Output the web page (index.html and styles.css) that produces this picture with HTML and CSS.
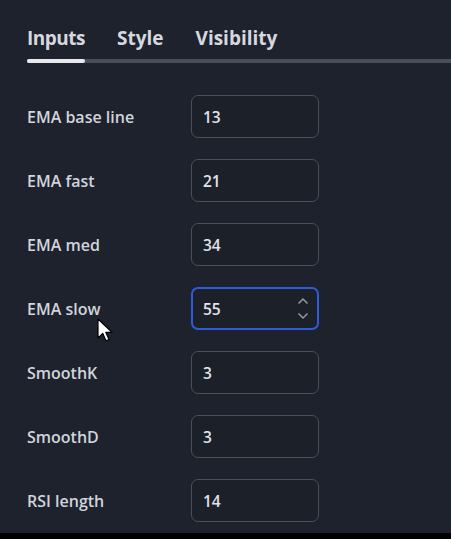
FILE: index.html
```html
<!DOCTYPE html>
<html>
<head>
<meta charset="utf-8">
<link rel="stylesheet" href="styles.css">
</head>
<body>
<div class="panel">
  <div class="tabs">
    <div class="tab active">Inputs</div>
    <div class="tab">Style</div>
    <div class="tab">Visibility</div>
  </div>
  <div class="rows">
    <div class="label">EMA base line</div><div class="field">13</div>
    <div class="label">EMA fast</div><div class="field">21</div>
    <div class="label">EMA med</div><div class="field">34</div>
    <div class="label">EMA slow
      <svg class="cursor" width="17" height="25" viewBox="0 0 17 25"><path d="M1 1 L1 20 L5.8 15.4 L9 22.8 L12 21.5 L8.8 14.3 L15 14.3 Z" fill="#fff" stroke="#000" stroke-width="1.2" stroke-linejoin="round"/></svg>
    </div>
    <div class="field focused">55
      <span class="spin">
        <svg width="12" height="8" viewBox="0 0 12 8"><path d="M1.5 6.5 L6 2 L10.5 6.5" fill="none" stroke="#9598a1" stroke-width="1.5"/></svg>
        <svg width="12" height="8" viewBox="0 0 12 8"><path d="M1.5 1.5 L6 6 L10.5 1.5" fill="none" stroke="#9598a1" stroke-width="1.5"/></svg>
      </span>
    </div>
    <div class="label">SmoothK</div><div class="field">3</div>
    <div class="label">SmoothD</div><div class="field">3</div>
    <div class="label">RSI length</div><div class="field">14</div>
  </div>
</div>
</body>
</html>
```
FILE: styles.css
```css
html { background: #000; }
body {
  margin: 0;
  font-family: "Open Sans", "DejaVu Sans", sans-serif;
  color: #d1d4dc;
}
.panel {
  height: 533px;
  background: #1e222d;
  padding-left: 27px;
  box-sizing: border-box;
  overflow: hidden;
}
.tabs {
  display: flex;
  gap: 32px;
  padding-top: 24px;
  border-bottom: 4px solid #4a4e5a;
  height: 35px;
  box-sizing: content-box;
}
.tab {
  position: relative;
  font-size: 19px;
  font-weight: 700;
  line-height: 28px;
  color: #d6d8df;
}
.tab.active {
  letter-spacing: -0.5px;
}
.tab.active::after {
  content: "";
  position: absolute;
  left: 0;
  right: 0;
  bottom: -4px;
  height: 4px;
  border-radius: 2px;
  background: #e8eaee;
}
.rows {
  margin-top: 32px;
  display: grid;
  grid-template-columns: 164px 128px;
  row-gap: 21px;
  align-items: center;
}
.label {
  font-size: 16px;
  font-weight: 600;
  color: #d1d4dc;
  position: relative;
}
.field {
  height: 43px;
  box-sizing: border-box;
  border: 1.5px solid #4a4e59;
  border-radius: 7px;
  padding-left: 11px;
  display: flex;
  align-items: center;
  font-size: 15.5px;
  font-weight: 600;
  color: #e0e3eb;
  background: #1c2029;
  position: relative;
}
.field.focused {
  border: 2px solid #2f5bd8;
  padding-left: 10px;
}
.spin {
  margin-left: auto;
  margin-right: 8px;
  display: flex;
  flex-direction: column;
  gap: 7px;
}
.spin svg { display: block; }
.cursor {
  position: absolute;
  left: 70px;
  top: 20px;
}
```
